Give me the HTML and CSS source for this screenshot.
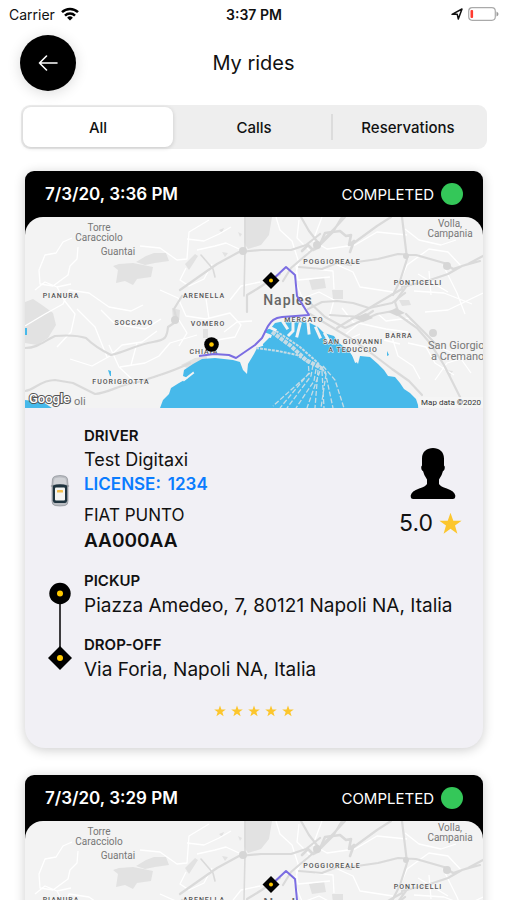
FILE: index.html
```html
<!DOCTYPE html>
<html lang="en">
<head>
<meta charset="utf-8">
<meta name="viewport" content="width=device-width, initial-scale=1">
<title>My rides</title>
<link rel="stylesheet" href="styles.css">
</head>
<body>
<svg class="defs" width="0" height="0" aria-hidden="true">
  <symbol id="star" viewBox="0 0 24 24"><path d="M12 .8 14.900 9H23.600L16.700 14.200 19.200 22.700 12 17.600 4.800 22.700 7.300 14.200.4 9H9.100Z"/></symbol>

  <symbol id="terrain" viewBox="25 217 458 191">
    <rect x="25" y="217" width="458" height="191" fill="#f3f3f3"/>
    <g fill="#e2e2e2">
      <path d="M244 217h28l-3 18-8 10-13 4-4-6z"/>
      <path d="M136 262l10-6 8-3 12 0 3 8-14 2-10 2zM119 264l14-1 20 4-2 10-14 2-4 6-8-4-9 2 2-13-5-4z"/>
      <path d="M25 302l8-3 9 6 11 8 3 12-8 13-11 7-12-2z"/>
      <path d="M172 308l8 2-1 12-6-2zM185 264l10-10 3 2-9 14zM203 329h5v9h-5zM181 365l14-7 12-2v4l-10 5-10 3z"/>
      <path d="M219 230l5-2-2 5zM238 232l4 2-2 3zM222 252l6 1-3 4zM309 280l15-3 2 11-14 2zM332 290h11v9h-10zM399 300h10l2 5-9 1zM445 370l8 1-3 5z"/>
    </g>
    <g fill="none" stroke="#fff" stroke-width="1.300" stroke-linejoin="round">
      <path d="M72 238l-9 4-7 11-11 2-6 15 1 14 13 2 15-11 2-9 7-7 1-12M35 290l10-8 12 5 14-3"/>
      <path d="M140 246l20 2 17 12 10-1 2-27 20-12M187 239l17 2 15-7 12-7M197 250l18-4 11-3 13 6M186 268l-6 12 9 6 15-7 8-15"/>
      <path d="M25 326l20-12 18-10 6-14 20 3 20 14 22 4 12-6M57 287l7 13 11 14-4 18-14 15M77 309l18 18 12 30M101 310l14 14 30 5 16-10M70 359l22 7 18-10 12-11 20-3 15-11"/>
      <path d="M109 345l10 22 17 16 26-8M120 367l25-4 14-7 11-13 27-8M131 365l6-22M160 290l18 8 8 18 20 3 24-6 11 12-6 12-18 3M179 320l8 13-8 13M206 299l3 20M230 300l11-14 19-4M224 332l13-10 15-1"/>
      <path d="M276 217l4 13 12 11 7 22-5 16 8 18M299 220l-2 18 14 14M322 217l-9 24 14 8 28-4 22-13 30 3M308 252l-12 14 2 14 32-3M298 300l21-8 15 8-5 18M315 269l18 2 1 18M333 263l20 9 7 15 33 5"/>
      <path d="M398 286l9-21 22-16 19 3 14 15M405 229l14 11 22 5 15-5M443 265l14 28 8 21M414 291l30 2 28 11M429 271l2 24M418 274l30 18M342 308l11 14 33 7 22 3M346 334l18-15 14-5 8 7 24-3M391 334l7 22 15 10 7 13M408 320l21 16 12 12 18 8 12 17M408 343l18 4 9 16 19 12M425 312l23-2 35-17M435 380l12-17 20-6M360 334l-15 7M384 340l16 4"/>
    </g>
    <g fill="none" stroke="#dadada" stroke-width="2.200" stroke-linejoin="round" stroke-linecap="round">
      <path d="M25 348c13 0 19-7 30-12 12-1 25 0 31 2 9 9 19 14 25 17 14-3 25-10 42-13 12-2 14-4 15-15l9-6-3-12 8-13"/>
      <path d="M180 290l17-12 20-14 22-12 22-2 30 0 15-5 14-11"/>
      <path d="M25 391c10-1 15-11 30-11l18 3 22 11c14-1 25-10 43-12 20-6 38-12 52-19"/>
      <path d="M201 255l12 14 2 8M245 217v34l-1 45" stroke-width="1.600"/>
      <path d="M283 281l8-13 27-23 16-16 11-12M301 217l8 14 11 14M320 245l13-13 9-15"/>
      <path d="M302 251l6-6 5 5 6-3 6-14 15-2 6 5 5-1-2 10 5-4-4 11" stroke-width="2.600"/>
      <path d="M351 245l26-19 14-9M402 217l4 33 1 9-7 22-7 14M350 263l28-4 20-5 18 1 28 8 9 6 15-5 15-8M480 261l-18 5-14 8-21 7-25 6"/>
      <path d="M299 267l23 2 15-6 14 2M247 312v-17l10-6 23-15M308 309l14-7 15-1 16 2 16 5 23-5 13-10M307 300l18 17 20 11 32-14 16-3 24 17 13 15 14 22 16 32"/>
      <path d="M337 328l39-24 17-10 9-5M330 315l14 1 20 1 9-6M398 311l-3-9 13-18M406 314l31 31"/>
      <path d="M310 314l20 12 20 12 21 15 21 16 17 12 13 14"/>
    </g>
    <g fill="#d6d6d6"><circle cx="406" cy="256" r="3"/><circle cx="447" cy="266" r="4"/><circle cx="317" cy="245" r="4"/><path d="M354 318l12-5 7 5-10 4zM388 312l8-4 9 5-8 3z"/><circle cx="433" cy="333" r="4"/><circle cx="175" cy="320" r="4"/><circle cx="243" cy="251" r="4"/></g>
    <g fill="#47b9ea">
      <path d="M160 408L163 400 169 394 171 388 179 383 188 378 183 376 184 370 193 364 202 359 215 358 233 360 240 362 243 370 247 374 248 364 254 354 257 348 262 345 270 337 264 331 271 328 275 323 285 321 300 321 310 323 318 327 324 333 334 336 339 343 348 350 355 359 358 364 360 356 370 357 378 364 384 370 388 376 395 377 400 383 404 389 410 393 416 399 419 408z"/>
      <path d="M25 400l8 1 10 1 9 6H25zM25 328h2v7h-2zM108 370l3 1v5h-1zM387 351l2 4-2 1z"/>
    </g>
    <g fill="none" stroke="#f3f3f3" stroke-linecap="square">
      <path stroke-width="3" d="M270 336l-8-3M275 330l-8-4M283 322l4 6M293 322v9l-4 4M300 324l-3 12M308 323l1 10M316 328l4 9M325 334l4 7M352 351l4 10"/>
      <path stroke-width="2" d="M184 380l9-7M256 347l6-2"/>
    </g>
    <g fill="none" stroke="#c7dce5">
      <path stroke-width="4" stroke-dasharray="4 1" d="M272 332l19 14 15 14 17 9"/>
      <path stroke-width="2" stroke-dasharray="3 1" d="M276 331l24 16 17 15 9 12M256 348l22 3 19 4 12 8"/>
      <path stroke-width="1.300" stroke-dasharray="5 2" d="M308 359l1 14-29 35M313 365l-2 11-24 32M316 369l-2 12-18 27M318 370l-3 38M320 371l-13 37M322 371l2 37M325 371l8 37M323 366l12 14 9 28M310 373l-37 33M326 374l-5 34"/>
    </g>
  </symbol>

  <symbol id="trip" viewBox="25 217 458 191">
    <path d="M271 281l15-14 9 8 2 21 12 19-27 2c-9 1-11 5-14 9l-6 12-7 7-19 13-7-3-15-1-15 2" fill="none" stroke="#7b6de2" stroke-width="2" stroke-linejoin="round"/>
    <path d="M271 272l8.500 8.500-8.500 8.500-8.500-8.500z"/><circle cx="271" cy="280.500" r="2" fill="#ffc800"/>
    <circle cx="211.500" cy="344.500" r="7.300"/><circle cx="211.500" cy="344.500" r="2.300" fill="#ffc800"/>
  </symbol>
</svg>

<div class="status-bar">
  <div class="carrier"><span>Carrier</span>
    <svg width="18" height="14" viewBox="0 0 18 14" aria-hidden="true"><g fill="none" stroke="#000" stroke-width="2.500"><path d="M1 5.200a11.600 11.600 0 0 1 16 0"/><path d="M4 8.600a7.200 7.200 0 0 1 10 0"/></g><path d="M9 13.500 6.100 10.700a4.200 4.200 0 0 1 5.800 0z"/></svg>
  </div>
  <div class="clock">3:37 PM</div>
  <div class="indicators">
    <svg width="12" height="12" viewBox="0 0 12 12" aria-hidden="true"><path d="M1 6.300 11 1 7.300 11 6.200 6.200z" fill="none" stroke="#111" stroke-width="1.500" stroke-linejoin="round"/></svg>
    <svg width="31" height="14" viewBox="0 0 31 14" aria-hidden="true"><rect x=".7" y=".7" width="26.600" height="12.600" rx="3.500" fill="#fff" stroke="#aaa" stroke-width="1.200"/><rect x="2.500" y="3" width="2.600" height="8" rx="1" fill="#ff3b30"/><path d="M28.500 4.500q2 1 2 2.500t-2 2.500z" fill="#999"/></svg>
  </div>
</div>

<header class="title-bar">
  <button class="back" type="button" aria-label="Back">
    <svg width="20" height="16" viewBox="0 0 20 16" aria-hidden="true"><path d="M19 8H1.500M8.500 1 1.500 8l7 7" fill="none" stroke="#fff" stroke-width="1.600" stroke-linecap="round" stroke-linejoin="round"/></svg>
  </button>
  <h1>My rides</h1>
</header>

<nav class="segments" aria-label="Ride type">
  <button type="button" class="segment selected" aria-pressed="true">All</button>
  <button type="button" class="segment" aria-pressed="false">Calls</button>
  <button type="button" class="segment divided" aria-pressed="false">Reservations</button>
</nav>

<main class="rides">
  <article class="ride">
    <div class="ride-head"><h2>7/3/20, 3:36 PM</h2><span class="state">COMPLETED</span><i class="dot"></i></div>
    <svg class="map" viewBox="25 217 458 191">
      <use href="#terrain" x="25" y="217" width="458" height="191"/>
      <g class="place"><text x="99" y="231">Torre</text><text x="99" y="241">Caracciolo</text><text x="118" y="255">Guantai</text><text x="450" y="227">Volla,</text><text x="450" y="237">Campania</text></g>
      <g class="area"><text x="332" y="264">POGGIOREALE</text><text x="418" y="285">PONTICELLI</text><text x="61" y="298">PIANURA</text><text x="204" y="298">ARENELLA</text><text x="134" y="325">SOCCAVO</text><text x="208" y="326">VOMERO</text><text x="304" y="322">MERCATO</text><text x="353" y="344">SAN GIOVANNI</text><text x="353" y="352">A TEDUCCIO</text><text x="399" y="338">BARRA</text><text x="204" y="354">CHIAIA</text><text x="121" y="384">FUORIGROTTA</text></g>
      <text class="city" x="288" y="305">Naples</text>
      <g class="town"><text x="428" y="349">San Giorgio</text><text x="431" y="360">a Cremano</text><text x="74" y="405">oli</text></g>
      <use href="#trip" x="25" y="217" width="458" height="191"/>
      <text class="google" x="29" y="403">Google</text>
      <rect x="418" y="397" width="65" height="11" fill="#f5f5f5" opacity=".8"/>
      <text class="credit" x="481" y="405">Map data ©2020</text>
    </svg>
    <div class="details">
      <section class="row driver">
        <div class="mark">
          <svg width="20" height="32" viewBox="0 0 20 32" aria-hidden="true"><path d="M2.500 4Q3 1.500 6 1q4-1 8 0 3 .5 3.500 3l.5 6v16q0 4-3 4.500-5 1-10 0Q2 30 2 26V10z" fill="#b9bcc1" stroke="#8c9096" stroke-width=".7"/><path d="M4.500 3.500q5.500-2 11 0l1 5.500h-13z" fill="#d0d2d6"/><path d="M2.800 10.500q7.200-2.500 14.400 0V25.500q-.5 2.500-2.200 2.500H5q-1.700 0-2.200-2.500z" fill="#1f343f"/><rect x="5" y="12.500" width="10" height="13" rx="1" fill="#f4f4f1"/><rect x="7" y="15" width="6" height="2.600" rx=".6" fill="#f3bd4b"/><path d="M.5 11 2.500 10v2zM19.500 11l-2-1v2z" fill="#858990"/></svg>
        </div>
        <div class="info">
          <h3>DRIVER</h3>
          <p class="name">Test Digitaxi</p>
          <p class="license"><span>LICENSE:</span> <span>1234</span></p>
          <p class="model">FIAT PUNTO</p>
          <p class="plate">AA000AA</p>
        </div>
        <div class="rating">
          <svg class="person" width="46" height="51" viewBox="0 0 46 51" aria-hidden="true"><path d="M23 0C29 0 34 3.500 34 10.500v7q1.300.5.600 3.500-.5 2-1.600 2-1 4.500-4 8.500v4.500q1.500 2.500 7.800 4.500 7.700 2.500 8.500 7 .2 3.500-2.500 3.500H3.200Q.5 51 .7 47.500q.8-4.500 8.500-7 6.300-2 7.800-4.500V31.500q-3-4-4-8.500-1.100 0-1.600-2-.7-3 .6-3.500v-7C12 3.500 17 0 23 0z"/></svg>
          <div class="score"><span>5.0</span><svg class="star" width="23" height="23" aria-hidden="true"><use href="#star"/></svg></div>
        </div>
      </section>
      <section class="row route">
        <div class="mark">
          <svg width="24" height="90" viewBox="0 0 24 90" aria-hidden="true"><path d="M12 11v68" stroke="#000" stroke-width="1.500"/><circle cx="12" cy="11.500" r="10.700"/><circle cx="12" cy="11.500" r="3" fill="#ffc800"/><path d="M12 64l12 12-12 12L0 76z"/><circle cx="12" cy="76" r="3" fill="#ffc800"/></svg>
        </div>
        <div class="info">
          <h3>PICKUP</h3>
          <p class="address">Piazza Amedeo, 7, 80121 Napoli NA, Italia</p>
          <h3 class="next">DROP-OFF</h3>
          <p class="address">Via Foria, Napoli NA, Italia</p>
        </div>
      </section>
      <div class="stars" role="img" aria-label="5 of 5">
        <svg class="star" width="12" height="12"><use href="#star"/></svg><svg class="star" width="12" height="12"><use href="#star"/></svg><svg class="star" width="12" height="12"><use href="#star"/></svg><svg class="star" width="12" height="12"><use href="#star"/></svg><svg class="star" width="12" height="12"><use href="#star"/></svg>
      </div>
    </div>
  </article>

  <article class="ride">
    <div class="ride-head"><h2>7/3/20, 3:29 PM</h2><span class="state">COMPLETED</span><i class="dot"></i></div>
    <svg class="map" viewBox="25 217 458 191">
      <use href="#terrain" x="25" y="217" width="458" height="191"/>
      <g class="place"><text x="99" y="231">Torre</text><text x="99" y="241">Caracciolo</text><text x="118" y="255">Guantai</text><text x="450" y="227">Volla,</text><text x="450" y="237">Campania</text></g>
      <g class="area"><text x="332" y="264">POGGIOREALE</text><text x="418" y="285">PONTICELLI</text><text x="61" y="298">PIANURA</text><text x="204" y="298">ARENELLA</text></g>
      <text class="city" x="288" y="305">Naples</text>
      <use href="#trip" x="25" y="217" width="458" height="191"/>
    </svg>
  </article>
</main>
</body>
</html>
```
FILE: styles.css
```css
* { box-sizing: border-box; }

html { height: 100%; overflow: hidden; }

body {
  margin: 0;
  height: 100%;
  overflow: hidden;
  background: #fff;
  color: #111;
  font-family: Inter, "Liberation Sans", sans-serif;
}

h1, h2, h3, p { margin: 0; }
button { border: 0; padding: 0; font: inherit; color: inherit; }
svg { display: block; flex: none; }
.defs { position: absolute; }

.status-bar {
  display: grid;
  grid-template-columns: 1fr auto 1fr;
  align-items: center;
  height: 28px;
  padding: 0 8px 0 9px;
  font-size: 14px;
}
.carrier { display: flex; align-items: center; gap: 6px; }
.clock { font-weight: 600; }
.indicators { display: flex; align-items: center; justify-content: flex-end; gap: 5px; }

.title-bar {
  display: grid;
  grid-template-columns: 56px 1fr 56px;
  align-items: center;
  margin: 7px 20px 0;
}
.back {
  display: grid;
  place-items: center;
  width: 56px;
  height: 56px;
  border-radius: 50%;
  background: #000;
  box-shadow: 0 2px 14px rgba(0, 0, 0, .14);
}
h1 { font-size: 20px; font-weight: 400; text-align: center; }

.segments {
  display: grid;
  grid-template-columns: repeat(3, 1fr);
  height: 44px;
  margin: 14px 20px 0 21px;
  padding: 2px;
  border-radius: 9px;
  background: #eee;
}
.segment {
  border-radius: 8px;
  background: transparent;
  font-size: 15px;
  font-weight: 500;
}
.selected { background: #fff; margin-right: 4px; box-shadow: 0 1px 4px rgba(0, 0, 0, .16); }
.divided {
  background: linear-gradient(#dcdcdc, #dcdcdc) 0 50% / 2px 26px no-repeat;
  border-radius: 0;
}

.rides {
  display: grid;
  gap: 27px;
  padding: 22px 24px 0 25px;
}
.ride {
  overflow: hidden;
  border-radius: 9px 9px 20px 20px;
  background: #f1f0f5;
  box-shadow: 0 2px 12px rgba(0, 0, 0, .2);
}
.ride-head {
  display: flex;
  align-items: center;
  height: 64px;
  margin-bottom: -18px;
  padding: 0 20px 18px;
  background: #000;
  color: #fff;
}
h2 { flex: 1; font-size: 17px; font-weight: 600; }
.state { font-size: 15px; }
.dot { width: 22px; height: 22px; margin-left: 7px; border-radius: 50%; background: #34c759; }

.map {
  position: relative;
  width: 100%;
  height: auto;
  border-radius: 18px 18px 0 0;
  font-family: Roboto, sans-serif;
  text-anchor: middle;
}
.place { font-size: 10px; fill: #777; }
.area { font-size: 7px; font-weight: 500; letter-spacing: 1px; fill: #555; stroke: #f5f5f5; stroke-width: 1px; paint-order: stroke; }
.city { font-size: 14px; font-weight: 500; letter-spacing: 1px; fill: #666; }
.town { font-size: 11px; fill: #777; }
.town text { text-anchor: start; }
.google { font-size: 13px; font-weight: 500; text-anchor: start; fill: #fff; stroke: #555; stroke-width: 2px; paint-order: stroke; }
.credit { font-size: 8px; text-anchor: end; fill: #333; }

.details { padding: 19px 21px 31px 0; }
.row { display: flex; align-items: center; }
.mark { display: grid; place-items: center; width: 59px; padding-left: 10px; }
.info { flex: 1; }
h3 { font-size: 15px; line-height: 18px; font-weight: 600; margin-bottom: 3px; }
.info p { line-height: 24px; white-space: nowrap; }
.name { font-size: 18px; }
.license { display: flex; gap: 7px; font-size: 17px; font-weight: 600; color: #0a7cff; }
.model { margin-top: 7px; font-size: 17px; }
.info .plate { font-size: 19px; font-weight: 600; line-height: 28px; }
.address { font-size: 19px; }

.rating { align-self: flex-start; padding-top: 21px; }
.person { margin: 0 6px 0 auto; }
.score { display: flex; align-items: center; gap: 6px; margin-top: 9px; font-size: 23px; line-height: 30px; }
.star { fill: #fcc62d; }

.route { margin-top: 17px; }
.route h3 { margin-bottom: 4px; }
.route .next { margin-top: 18px; }
.stars { display: flex; justify-content: center; gap: 5px; margin: 23px 0 0 21px; }
```
